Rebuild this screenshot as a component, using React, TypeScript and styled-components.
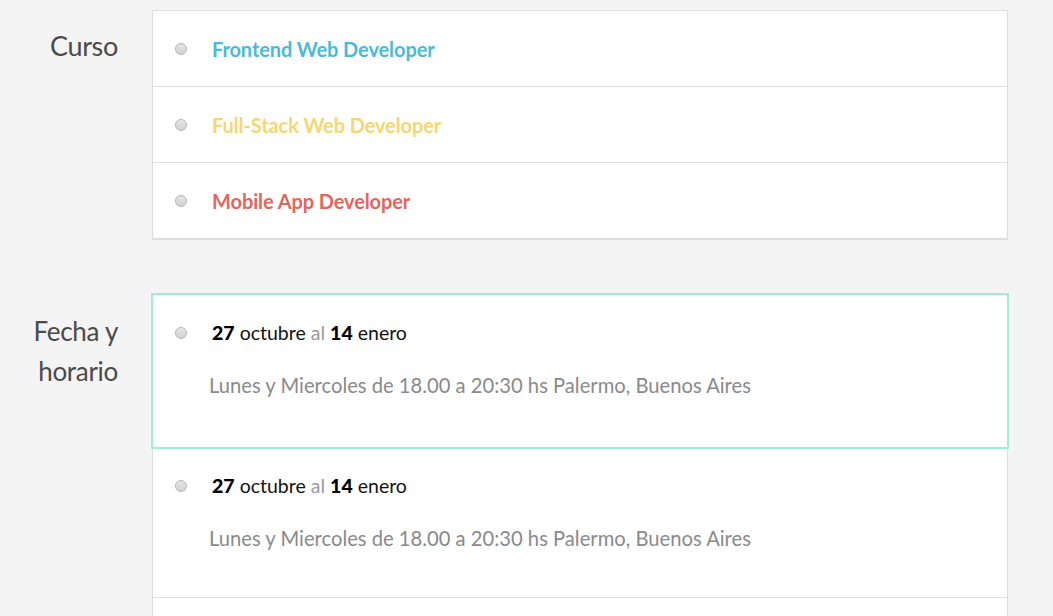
import React, { FC } from 'react';
import styled, { createGlobalStyle } from 'styled-components';

const GlobalStyle = createGlobalStyle`
  html, body {
    margin: 0;
    padding: 0;
    background: #f4f4f4;
    font-family: 'Lato', 'Noto Sans', sans-serif;
  }
`;

type TCourse = { name: string; color: string };
type TSchedule = { from: string; fromMonth: string; to: string; toMonth: string; detail: string };

const courses: TCourse[] = [
  { name: 'Frontend Web Developer', color: '#4bbad6' },
  { name: 'Full-Stack Web Developer', color: '#f7d672' },
  { name: 'Mobile App Developer', color: '#e4655b' },
];

const schedules: TSchedule[] = [
  { from: '27', fromMonth: 'octubre', to: '14', toMonth: 'enero', detail: 'Lunes y Miercoles de 18.00 a 20:30 hs Palermo, Buenos Aires' },
  { from: '27', fromMonth: 'octubre', to: '14', toMonth: 'enero', detail: 'Lunes y Miercoles de 18.00 a 20:30 hs Palermo, Buenos Aires' },
  { from: '27', fromMonth: 'octubre', to: '14', toMonth: 'enero', detail: 'Lunes y Miercoles de 18.00 a 20:30 hs Palermo, Buenos Aires' },
];

const Page = styled.div`
  padding-top: 10px;
  display: flex;
  flex-direction: column;
  gap: 53px;
`;

const Section = styled.section`
  display: flex;
  align-items: flex-start;
`;

const Label = styled.div<{ $top: number; $size: number }>`
  width: 118px;
  margin-right: 34px;
  padding-top: ${({ $top }) => $top}px;
  text-align: right;
  font-size: ${({ $size }) => $size}px;
  line-height: 40px;
  color: #4a4a4a;
  letter-spacing: -0.3px;
`;

const Card = styled.div`
  width: 854px;
  background: #fff;
  border: 1px solid #dddddd;
  border-bottom-width: 2px;
`;

const CourseRow = styled.label`
  display: flex;
  align-items: center;
  height: 75px;
  border-top: 1px solid #dddddd;
  &:first-child { border-top: none; }
`;

const Radio = styled.span`
  flex: none;
  width: 10px;
  height: 10px;
  margin-left: 22px;
  margin-right: 25px;
  border-radius: 50%;
  border: 1px solid #b4b4b4;
  background: linear-gradient(#e6e6e6, #d2d2d2);
`;

const CourseName = styled.span<{ $color: string }>`
  font-size: 20px;
  font-weight: 700;
  color: ${({ $color }) => $color};
  letter-spacing: -0.1px;
  margin-top: 1px;
`;

const ScheduleList = styled.div`
  width: 854px;
  background: #fff;
  border: 1px solid #dddddd;
  border-top: none;
`;

const ScheduleRow = styled.div<{ $selected?: boolean }>`
  display: flex;
  align-items: flex-start;
  padding: 25px 0 47px;
  border-bottom: 1px solid #dddddd;
  ${({ $selected }) => $selected && `
    border: 2px solid #9fecd8;
    margin: 0 -2px;
    padding: 26px 0 50px;
  `}
`;

const RadioTop = styled(Radio)`
  margin-top: 6px;
`;

const ScheduleBody = styled.div`
  display: flex;
  flex-direction: column;
  gap: 28px;
`;

const DateLine = styled.div`
  font-size: 19.5px;
  line-height: 24px;
  color: #111;
  b { font-weight: 900; color: #000; }
  span { color: #9a9a9a; }
`;

const Detail = styled.div`
  font-size: 20.2px;
  line-height: 24px;
  color: #8a8a8a;
  margin-left: -3px;
`;

const App: FC = () => (
  <>
    <GlobalStyle />
    <Page>
      <Section>
        <Label $top={16} $size={27}>Curso</Label>
        <Card>
          {courses.map(c => (
            <CourseRow key={c.name}>
              <Radio />
              <CourseName $color={c.color}>{c.name}</CourseName>
            </CourseRow>
          ))}
        </Card>
      </Section>

      <Section>
        <Label $top={18} $size={26}>Fecha y<br />horario</Label>
        <ScheduleList>
          {schedules.map((s, i) => (
            <ScheduleRow key={i} $selected={i === 0}>
              <RadioTop />
              <ScheduleBody>
                <DateLine>
                  <b>{s.from}</b> {s.fromMonth} <span>al</span> <b>{s.to}</b> {s.toMonth}
                </DateLine>
                <Detail>{s.detail}</Detail>
              </ScheduleBody>
            </ScheduleRow>
          ))}
        </ScheduleList>
      </Section>
    </Page>
  </>
);

export default App;
